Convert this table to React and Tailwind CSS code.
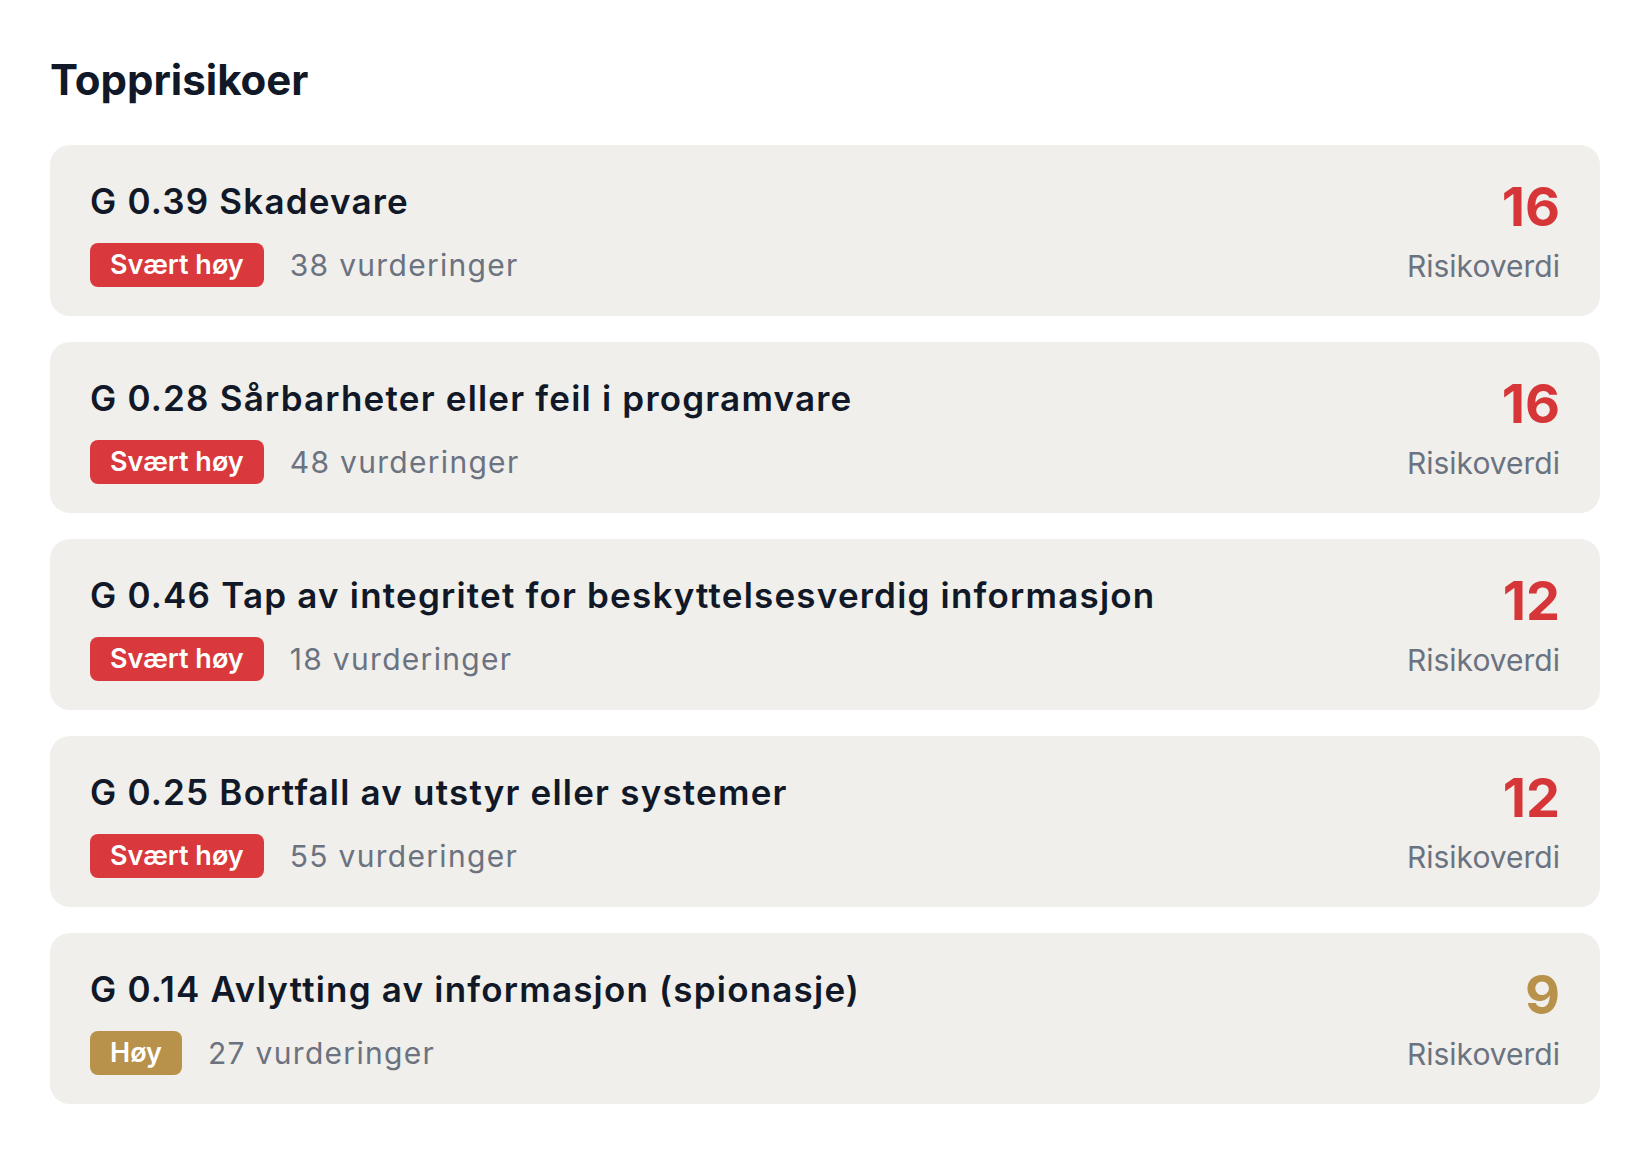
import React from "react";

const risks = [
  { id: "G 0.39", name: "Skadevare", level: "Svært høy", count: 38, score: 16 },
  { id: "G 0.28", name: "Sårbarheter eller feil i programvare", level: "Svært høy", count: 48, score: 16 },
  { id: "G 0.46", name: "Tap av integritet for beskyttelsesverdig informasjon", level: "Svært høy", count: 18, score: 12 },
  { id: "G 0.25", name: "Bortfall av utstyr eller systemer", level: "Svært høy", count: 55, score: 12 },
  { id: "G 0.14", name: "Avlytting av informasjon (spionasje)", level: "Høy", count: 27, score: 9 },
];

function RiskCard({ risk }) {
  const critical = risk.level === "Svært høy";
  return (
    <div className="flex items-start justify-between rounded-[20px] bg-[#f0efeb] pl-[40px] pr-[40px] pt-[36px] pb-[29px]">
      <div className="flex flex-col">
        <h3 className="text-[35px] leading-[40px] font-semibold tracking-[1.2px] text-[#111827]">
          {risk.id} {risk.name}
        </h3>
        <div className="mt-[22px] flex items-center gap-[26px]">
          <span
            className={
              critical
                ? "h-[44px] rounded-[8px] bg-[#d9393c] px-[20px] text-[27px] leading-[44px] font-semibold text-white"
                : "h-[44px] rounded-[8px] bg-[#b8914a] px-[20px] text-[27px] leading-[44px] font-semibold text-white"
            }
          >
            {risk.level}
          </span>
          <span className="text-[30px] leading-[40px] tracking-[1.3px] text-[#6b7280]">
            {risk.count} vurderinger
          </span>
        </div>
      </div>
      <div className="flex flex-col items-end">
        <span
          className={
            critical
              ? "text-[54px] leading-[52px] font-bold text-[#d63638]"
              : "text-[54px] leading-[52px] font-bold text-[#b8914a]"
          }
        >
          {risk.score}
        </span>
        <span className="mt-[13px] text-[30px] leading-[40px] text-[#6b7280]">Risikoverdi</span>
      </div>
    </div>
  );
}

export default function App() {
  return (
    <div className="min-h-screen bg-white px-[50px] pt-[54px] pb-[50px] font-['Inter',sans-serif]">
      <h2 className="mb-[39px] text-[42px] leading-[52px] font-bold text-[#111827]">Topprisikoer</h2>
      <div className="flex flex-col gap-[26px]">
        {risks.map((risk) => (
          <RiskCard key={risk.id} risk={risk} />
        ))}
      </div>
    </div>
  );
}
